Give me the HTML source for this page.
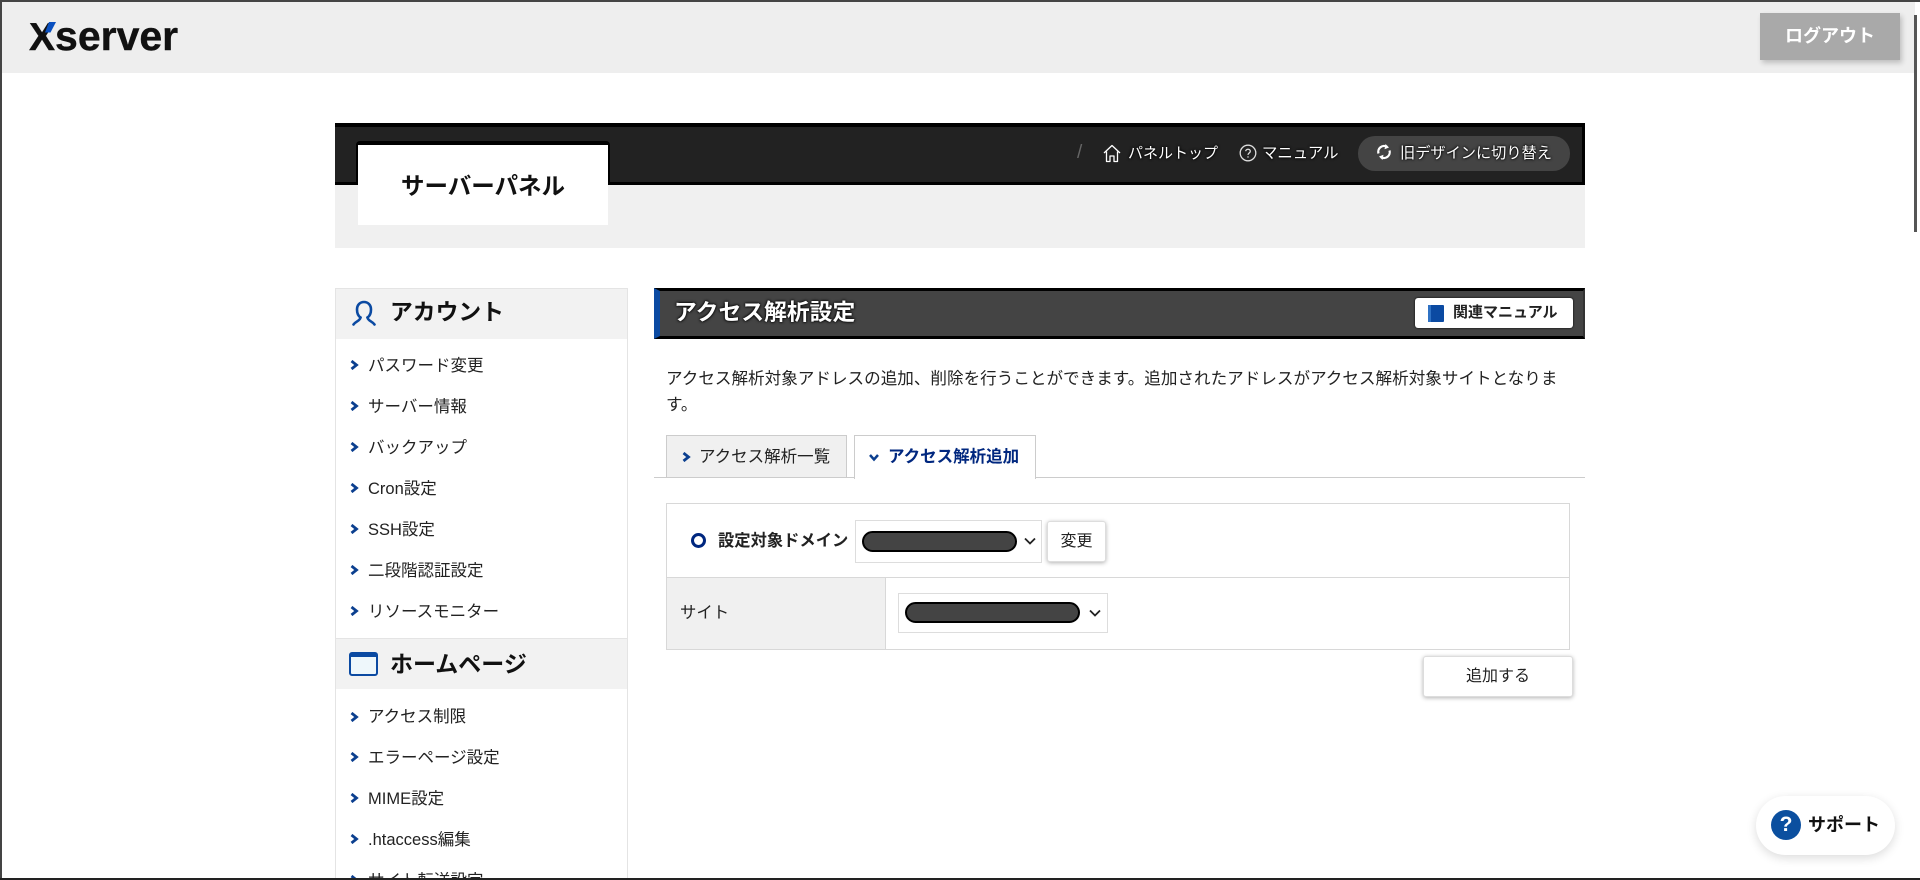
<!DOCTYPE html>
<html lang="ja"><head><meta charset="utf-8"><title>サーバーパネル</title>
<style>
html,body{margin:0;padding:0;background:#fff;width:1920px;height:880px;overflow:hidden}
body{position:relative;font-family:"Liberation Sans","Noto Sans CJK JP",sans-serif;color:#222}
.a{position:absolute;box-sizing:border-box}
.t{position:absolute;white-space:nowrap;line-height:24px;height:24px}
.nav{color:#fff;font-size:15px;text-shadow:0 0 3px #000,0 0 2px #000}
.side{font-size:16.5px;color:#222}
.h{font-size:22.8px;font-weight:bold;color:#111}
.chev{position:absolute}
.pill{position:absolute;box-sizing:border-box;background:#444;border:2px solid #000;border-radius:11px}
.sel{position:absolute;box-sizing:border-box;border:1px solid #ddd;background:#fff}
.btn{position:absolute;box-sizing:border-box;background:#fff;border:1px solid #ddd;border-radius:3px;box-shadow:0 1px 4px rgba(0,0,0,.3);text-align:center;font-size:16px;color:#222}
</style></head><body>

<!-- header -->
<div class="a" style="left:2px;top:2px;width:1913px;height:71px;background:#eee"></div>
<div class="t" style="left:29px;top:16px;height:40px;line-height:40px;font-size:41px;font-weight:bold;color:#111;-webkit-text-stroke:.4px #111"><span style="font-size:39px">X</span>server</div>
<svg class="a" style="left:44px;top:22px" width="14" height="12" viewBox="0 0 14 12"><polygon points="5,0 12,0 6.500,10.500 1,10.500" fill="#0a50c0"/></svg>
<div class="a" style="left:1760px;top:13px;width:140px;height:47px;background:#a9a9a9;box-shadow:2px 3px 5px rgba(0,0,0,.2);color:#fff;font-size:18px;font-weight:bold;text-align:center;line-height:46px">ログアウト</div>

<!-- dark panel -->
<div class="a" style="left:335px;top:123px;width:1250px;height:62px;background:#222;border-top:4px solid #000;border-bottom:3px solid #000;border-right:3px solid #000"></div>
<div class="a" style="left:335px;top:185px;width:1250px;height:63px;background:#f0f0f0"></div>
<div class="a" style="left:356px;top:141px;width:254px;height:44px;background:#000;border-radius:4px 4px 0 0"></div>
<div class="a" style="left:358px;top:145px;width:250px;height:80px;background:#fff"></div>
<div class="t" style="left:358px;width:250px;top:172px;height:28px;line-height:28px;text-align:center;font-size:23.5px;font-weight:bold;color:#111">サーバーパネル</div>

<div class="t" style="left:1077px;top:141px;color:#666;font-size:19px">/</div>
<svg class="a" style="left:1103px;top:144px" width="18" height="19" viewBox="0 0 18 19" fill="none" stroke="#fff" stroke-width="1.3" stroke-linejoin="round"><path d="M1 9 9 1.500 17 9M3.500 7.500V17.500H7V12H11V17.500H14.500V7.500"/></svg>
<div class="t nav" style="left:1128px;top:142px">パネルトップ</div>
<svg class="a" style="left:1239px;top:144px" width="18" height="18" viewBox="0 0 18 18" fill="none" stroke="#ddd" stroke-width="1.3"><circle cx="9" cy="9" r="7.800"/><path d="M6.700 7.200C6.800 4.600 11.300 4.600 11.300 7.200 11.300 9 9 9 9 10.900"/><path d="M9 12.300V13.600"/></svg>
<div class="t nav" style="left:1262px;top:142px;font-size:15.4px">マニュアル</div>
<div class="a" style="left:1358px;top:136px;width:212px;height:35px;background:#444;border-radius:17px"></div>
<svg class="a" style="left:1376px;top:143px" width="16" height="18" viewBox="0 0 16 18" fill="none" stroke="#fff" stroke-width="2.200"><path d="M2.500 10.500A5.800 5.800 0 0 1 11 3.800"/><path d="M13.500 7.500A5.800 5.800 0 0 1 5 14.200"/><path d="M9.500 1 13 4.500 8.500 6.200Z" fill="#fff" stroke="none"/><path d="M6.500 17 3 13.500 7.500 11.800Z" fill="#fff" stroke="none"/></svg>
<div class="t nav" style="left:1400px;top:142px;font-size:15.2px">旧デザインに切り替え</div>

<!-- sidebar -->
<div class="a" style="left:335px;top:288px;width:293px;height:600px;border:1px solid #e4e4e4;border-bottom:none"></div>
<div class="a" style="left:336px;top:289px;width:291px;height:50px;background:#f2f2f2"></div>
<svg class="a" style="left:351px;top:300px" width="26" height="28" viewBox="0 0 26 28" fill="none" stroke="#0b4aa2" stroke-width="2.600" stroke-linecap="round"><path d="M9.500 17.500C6.500 15.500 6 12 6 9.500 6 5 9 2 13 2S20 5 20 9.500C20 12 19.500 15.500 16.500 17.500"/><path d="M9.500 17.500C9 21 5 21 2.500 24.500"/><path d="M16.500 17.500C17 21 21 21 23.500 24.500"/></svg>
<div class="t h" style="left:390px;top:300px">アカウント</div>

<div class="a" style="left:336px;top:638px;width:291px;height:51px;background:#f2f2f2"></div>
<div class="a" style="left:336px;top:638px;width:291px;height:1px;background:#e4e4e4"></div>
<div class="a" style="left:349px;top:652px;width:29px;height:24px;border:2px solid #0b4aa2;border-top-width:5px;border-radius:3px;background:#eef7fb"></div>
<div class="t h" style="left:390px;top:652px;font-size:23px">ホームページ</div>

<svg width="0" height="0" style="position:absolute"><defs><path id="c" d="M1.500 1 6.500 5 1.500 9" fill="none" stroke="#0b3f8f" stroke-width="2.800"/></defs></svg>

<svg class="chev" style="left:350px;top:360px" width="9" height="10"><use href="#c"/></svg><div class="t side" style="left:368px;top:354px">パスワード変更</div>
<svg class="chev" style="left:350px;top:401px" width="9" height="10"><use href="#c"/></svg><div class="t side" style="left:368px;top:395px">サーバー情報</div>
<svg class="chev" style="left:350px;top:442px" width="9" height="10"><use href="#c"/></svg><div class="t side" style="left:368px;top:436px">バックアップ</div>
<svg class="chev" style="left:350px;top:483px" width="9" height="10"><use href="#c"/></svg><div class="t side" style="left:368px;top:477px">Cron設定</div>
<svg class="chev" style="left:350px;top:524px" width="9" height="10"><use href="#c"/></svg><div class="t side" style="left:368px;top:518px">SSH設定</div>
<svg class="chev" style="left:350px;top:565px" width="9" height="10"><use href="#c"/></svg><div class="t side" style="left:368px;top:559px">二段階認証設定</div>
<svg class="chev" style="left:350px;top:606px" width="9" height="10"><use href="#c"/></svg><div class="t side" style="left:368px;top:600px">リソースモニター</div>

<svg class="chev" style="left:350px;top:712px" width="9" height="10"><use href="#c"/></svg><div class="t side" style="left:368px;top:705px">アクセス制限</div>
<svg class="chev" style="left:350px;top:752px" width="9" height="10"><use href="#c"/></svg><div class="t side" style="left:368px;top:746px">エラーページ設定</div>
<svg class="chev" style="left:350px;top:793px" width="9" height="10"><use href="#c"/></svg><div class="t side" style="left:368px;top:787px">MIME設定</div>
<svg class="chev" style="left:350px;top:834px" width="9" height="10"><use href="#c"/></svg><div class="t side" style="left:368px;top:828px">.htaccess編集</div>
<svg class="chev" style="left:350px;top:875px" width="9" height="10"><use href="#c"/></svg><div class="t side" style="left:368px;top:869px">サイト転送設定</div>

<!-- title bar -->
<div class="a" style="left:654px;top:288px;width:931px;height:51px;background:#444;border-top:3px solid #000;border-bottom:3px solid #000;border-left:6px solid #0b4aa2;border-right:2px solid #333"></div>
<div class="t" style="left:674px;top:298px;height:28px;line-height:28px;color:#fff;font-size:22.800px;font-weight:bold;text-shadow:0 0 3px #000,0 0 2px #000">アクセス解析設定</div>
<div class="a" style="left:1415px;top:298px;width:158px;height:30px;background:#fff;border-radius:3px;box-shadow:0 0 2px #000"></div>
<svg class="a" style="left:1428px;top:305px" width="16" height="17" viewBox="0 0 16 17"><rect width="16" height="17" rx="1" fill="#0b4aa2"/><rect x="0" y="0" width="3" height="17" fill="#2f72c4"/></svg>
<div class="t" style="left:1453px;top:301px;font-size:15px;font-weight:bold;color:#222">関連マニュアル</div>

<!-- text -->
<div class="t" style="left:666px;top:367px;font-size:16.580px">アクセス解析対象アドレスの追加、削除を行うことができます。追加されたアドレスがアクセス解析対象サイトとなりま</div>
<div class="t" style="left:666px;top:393px;font-size:16.580px">す。</div>

<!-- tabs -->
<div class="a" style="left:654px;top:477px;width:931px;height:1px;background:#ccc"></div>
<div class="a" style="left:666px;top:435px;width:181px;height:43px;background:#f0f0f0;border:1px solid #ccc"></div>
<div class="a" style="left:854px;top:435px;width:182px;height:44px;background:#fff;border:1px solid #ccc;border-bottom:none"></div>
<svg class="chev" style="left:682px;top:452px" width="9" height="10"><use href="#c"/></svg>
<div class="t" style="left:699px;top:445px;font-size:16.500px">アクセス解析一覧</div>
<svg class="chev" style="left:869px;top:453px" width="10" height="9" viewBox="0 0 10 9"><path d="M1 2 5 6.500 9 2" fill="none" stroke="#0b3f8f" stroke-width="2.500"/></svg>
<div class="t" style="left:888px;top:445px;font-size:16.500px;font-weight:bold;color:#00277f">アクセス解析追加</div>

<!-- table -->
<div class="a" style="left:666px;top:503px;width:904px;height:147px;border:1px solid #d8d8d8"></div>
<div class="a" style="left:666px;top:577px;width:904px;height:1px;background:#d8d8d8"></div>
<div class="a" style="left:667px;top:578px;width:219px;height:71px;background:#f0f0f0;border-right:1px solid #d8d8d8"></div>

<div class="a" style="left:691px;top:533px;width:15px;height:15px;border:3.500px solid #00277f;border-radius:50%"></div>
<div class="t" style="left:718px;top:529px;font-size:16.300px;font-weight:bold;color:#222">設定対象ドメイン</div>
<div class="sel" style="left:855px;top:520px;width:187px;height:43px"></div>
<div class="pill" style="left:862px;top:531px;width:155px;height:21px"></div>
<svg class="a" style="left:1024px;top:537px" width="12" height="9" viewBox="0 0 12 9"><path d="M1 1.500 6 6.500 11 1.500" fill="none" stroke="#222" stroke-width="1.800"/></svg>
<div class="btn" style="left:1047px;top:521px;width:59px;height:41px;line-height:39px">変更</div>

<div class="t" style="left:680px;top:601px;font-size:16.400px">サイト</div>
<div class="sel" style="left:898px;top:593px;width:210px;height:40px"></div>
<div class="pill" style="left:905px;top:602px;width:175px;height:21px"></div>
<svg class="a" style="left:1089px;top:609px" width="12" height="9" viewBox="0 0 12 9"><path d="M1 1.500 6 6.500 11 1.500" fill="none" stroke="#222" stroke-width="1.800"/></svg>

<div class="btn" style="left:1423px;top:656px;width:150px;height:41px;line-height:39px">追加する</div>

<!-- support -->
<div class="a" style="left:1756px;top:796px;width:139px;height:59px;background:#fff;border-radius:30px;box-shadow:0 3px 10px rgba(0,0,0,.14)"></div>
<div class="a" style="left:1771px;top:810px;width:30px;height:30px;border-radius:50%;background:#0b4f9f;color:#fff;font-size:21px;font-weight:bold;text-align:center;line-height:30px">?</div>
<div class="t" style="left:1808px;top:813px;font-size:18px;font-weight:bold;color:#111">サポート</div>

<!-- scrollbar + frame -->
<div class="a" style="left:1914px;top:15px;width:3px;height:217px;background:#555"></div>
<div class="a" style="left:0;top:0;width:1920px;height:1.500px;background:#444"></div>
<div class="a" style="left:0;top:0;width:1.500px;height:880px;background:#444"></div>
<div class="a" style="left:0;top:878px;width:1920px;height:2px;background:#222"></div>
</body></html>
